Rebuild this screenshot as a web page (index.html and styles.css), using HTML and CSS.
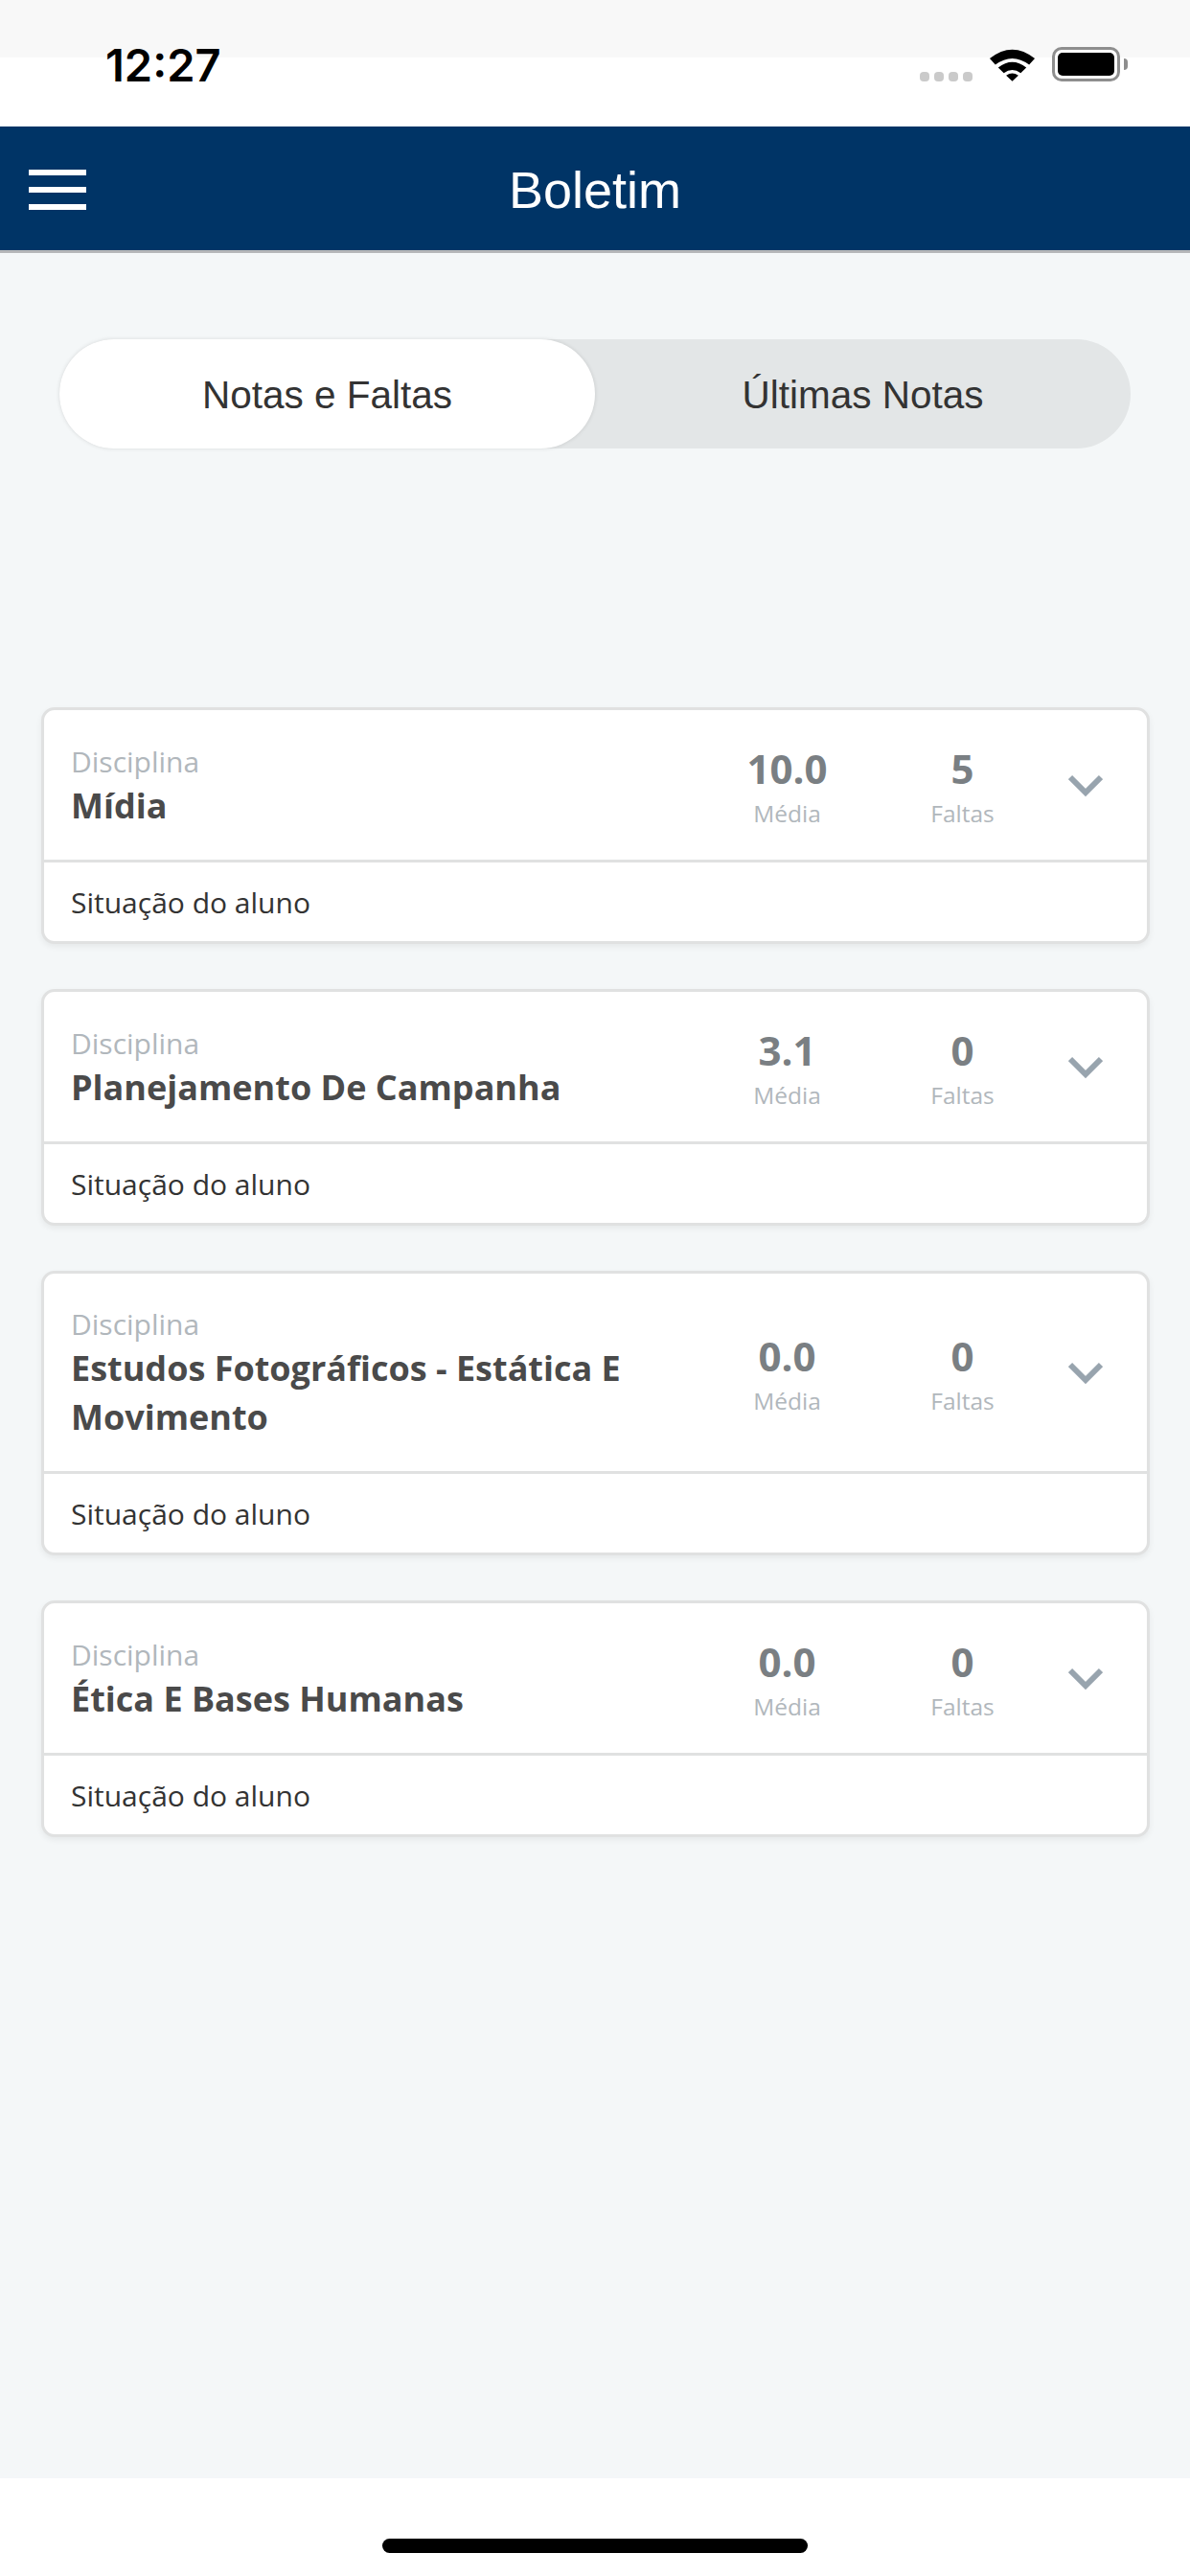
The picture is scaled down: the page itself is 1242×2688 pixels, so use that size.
FILE: index.html
```html
<!DOCTYPE html>
<html lang="pt-BR">
<head>
    <meta charset="UTF-8">
    <meta name="viewport" content="width=device-width, initial-scale=1.0">
    <title>Boletim</title>
    <link rel="stylesheet" href="styles.css">
</head>
<body>
    <div class="statusbar">
        <span class="clock">12:27</span>
        <div class="status-icons">
            <div class="signal"><i></i><i></i><i></i><i></i></div>
            <svg class="wifi" width="49" height="36" viewBox="0 0 50 36">
                <path d="M1 12 Q25 -7 49 12 L43 18.500 Q25 5 7 18.500 Z" fill="#000"/>
                <path d="M10 21.500 Q25 10 40 21.500 L34 27.500 Q25 20.500 16 27.500 Z" fill="#000"/>
                <path d="M18.500 30 Q25 25.500 31.500 30 L25 36 Z" fill="#000"/>
            </svg>
            <div class="battery"><div class="battery-fill"></div></div>
            <div class="battery-tip"></div>
        </div>
    </div>

    <header class="topbar">
        <button class="menu"><span></span><span></span><span></span></button>
        <h1>Boletim</h1>
    </header>

    <main class="content">
        <div class="tabs">
            <div class="tab active">Notas e Faltas</div>
            <div class="tab">Últimas Notas</div>
        </div>

        <section class="card">
            <div class="card-top">
                <div class="subject">
                    <span class="subject-label">Disciplina</span>
                    <strong class="subject-name">Mídia</strong>
                </div>
                <div class="stat"><b>10.0</b><span>Média</span></div>
                <div class="stat"><b>5</b><span>Faltas</span></div>
                <svg class="chevron" width="36" height="24" viewBox="0 0 36 24"><path d="M2 3 L18 19 L34 3" fill="none" stroke="#98a4ae" stroke-width="6"/></svg>
            </div>
            <div class="card-foot">Situação do aluno</div>
        </section>

        <section class="card">
            <div class="card-top">
                <div class="subject">
                    <span class="subject-label">Disciplina</span>
                    <strong class="subject-name">Planejamento De Campanha</strong>
                </div>
                <div class="stat"><b>3.1</b><span>Média</span></div>
                <div class="stat"><b>0</b><span>Faltas</span></div>
                <svg class="chevron" width="36" height="24" viewBox="0 0 36 24"><path d="M2 3 L18 19 L34 3" fill="none" stroke="#98a4ae" stroke-width="6"/></svg>
            </div>
            <div class="card-foot">Situação do aluno</div>
        </section>

        <section class="card">
            <div class="card-top">
                <div class="subject">
                    <span class="subject-label">Disciplina</span>
                    <strong class="subject-name">Estudos Fotográficos - Estática E Movimento</strong>
                </div>
                <div class="stat"><b>0.0</b><span>Média</span></div>
                <div class="stat"><b>0</b><span>Faltas</span></div>
                <svg class="chevron" width="36" height="24" viewBox="0 0 36 24"><path d="M2 3 L18 19 L34 3" fill="none" stroke="#98a4ae" stroke-width="6"/></svg>
            </div>
            <div class="card-foot">Situação do aluno</div>
        </section>

        <section class="card">
            <div class="card-top">
                <div class="subject">
                    <span class="subject-label">Disciplina</span>
                    <strong class="subject-name">Ética E Bases Humanas</strong>
                </div>
                <div class="stat"><b>0.0</b><span>Média</span></div>
                <div class="stat"><b>0</b><span>Faltas</span></div>
                <svg class="chevron" width="36" height="24" viewBox="0 0 36 24"><path d="M2 3 L18 19 L34 3" fill="none" stroke="#98a4ae" stroke-width="6"/></svg>
            </div>
            <div class="card-foot">Situação do aluno</div>
        </section>
    </main>

    <div class="homebar"><div class="home-pill"></div></div>
</body>
</html>
```

FILE: styles.css
```css
* {
    box-sizing: border-box;
}
body {
    margin: 0;
    height: 2688px;
    display: flex;
    flex-direction: column;
    background-color: #fff;
    font-family: "Open Sans", "Noto Sans", sans-serif;
    overflow: hidden;
}

/* status bar */
.statusbar {
    height: 132px;
    flex: none;
    padding: 40px 65px 0 110px;
    display: flex;
    justify-content: space-between;
    align-items: flex-start;
    background: linear-gradient(#f8f8f8 60px, #fff 60px);
}
.clock {
    font-family: Inter, "Liberation Sans", sans-serif;
    font-size: 47px;
    font-weight: 600;
    line-height: 54px;
    color: #000;
    margin-top: 1px;
}
.status-icons {
    display: flex;
    align-items: flex-start;
    padding-top: 9px;
}
.signal {
    display: flex;
    gap: 5px;
    margin-top: 26px;
    margin-right: 17px;
}
.signal i {
    width: 10px;
    height: 10px;
    border-radius: 4px;
    background-color: #cacaca;
}
.wifi {
    margin-right: 17px;
}
.battery {
    width: 71px;
    height: 36px;
    padding: 3px;
    border: 3px solid #8e8e8e;
    border-radius: 10px;
    background-color: #fff;
}
.battery-fill {
    height: 100%;
    background-color: #000;
    border-radius: 5px;
}
.battery-tip {
    width: 4px;
    height: 12px;
    margin-top: 12px;
    margin-left: 4px;
    background-color: #8e8e8e;
    border-radius: 0 6px 6px 0;
}

/* header */
.topbar {
    height: 132px;
    flex: none;
    display: flex;
    align-items: center;
    justify-content: center;
    padding-top: 2px;
    background-color: #003466;
    border-bottom: 3px solid #b4b6b8;
    position: relative;
}
.topbar h1 {
    margin: 0;
    font-family: "Liberation Sans", Arial, sans-serif;
    font-weight: normal;
    font-size: 54px;
    color: #fff;
}
.menu {
    position: absolute;
    left: 30px;
    top: 45px;
    width: 60px;
    padding: 0;
    border: none;
    background: none;
    display: flex;
    flex-direction: column;
    gap: 12px;
}
.menu span {
    height: 6px;
    background-color: #fff;
}

/* main */
.content {
    flex: 1;
    background-color: #f4f7f8;
    padding: 90px 42px 0 43px;
    display: flex;
    flex-direction: column;
    align-items: stretch;
}
.tabs {
    display: flex;
    height: 114px;
    margin: 0 20px 270px 19px;
    border-radius: 57px;
    background-color: #e3e6e7;
    flex: none;
}
.tab {
    width: 559px;
    padding-top: 2px;
    display: flex;
    align-items: center;
    justify-content: center;
    font-family: "Liberation Sans", Arial, sans-serif;
    font-size: 40.500px;
    color: #333;
}
.tab.active {
    background-color: #fff;
    border-radius: 57px;
    box-shadow: 0 0 4px rgba(0, 0, 0, 0.12);
}

/* cards */
.card {
    flex: none;
    margin-bottom: 47px;
    background-color: #fff;
    border: 3px solid #e0e1e1;
    border-radius: 14px;
    box-shadow: 0 3px 6px rgba(0, 0, 0, 0.06);
}
.card-top {
    display: flex;
    align-items: center;
    min-height: 159px;
    padding-left: 28px;
    border-bottom: 3px solid #e0e1e1;
}
.subject {
    width: 656px;
    padding: 33px 20px 31px 0;
    flex: none;
    display: flex;
    flex-direction: column;
}
.subject-label {
    font-size: 30px;
    line-height: 40px;
    color: #b1b7bc;
}
.subject-name {
    font-size: 36px;
    line-height: 51px;
    font-weight: bold;
    color: #4a4a4a;
}
.stat {
    width: 183px;
    margin-top: 5px;
    flex: none;
    display: flex;
    flex-direction: column;
    align-items: center;
}
.stat b {
    font-size: 42px;
    line-height: 50px;
    color: #7a7f83;
}
.stat span {
    margin-top: 5px;
    font-size: 24.500px;
    line-height: 34px;
    color: #b1b7bc;
}
.chevron {
    margin: 1px 0 0 19px;
    flex: none;
}
.card-foot {
    height: 82px;
    display: flex;
    align-items: center;
    padding-left: 28px;
    font-size: 30px;
    color: #333;
}

/* home indicator */
.homebar {
    height: 102px;
    flex: none;
    background-color: #fff;
    display: flex;
    justify-content: center;
    padding-top: 63px;
}
.home-pill {
    width: 444px;
    height: 15px;
    background-color: #000;
    border-radius: 8px;
}
```
